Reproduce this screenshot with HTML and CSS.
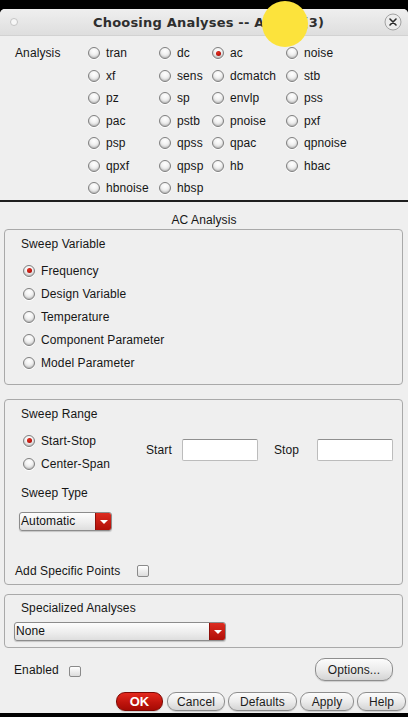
FILE: index.html
```html
<!DOCTYPE html>
<html>
<head>
<meta charset="utf-8">
<title>Choosing Analyses</title>
<link rel="stylesheet" href="styles.css">
</head>
<body>
<div class="window">
  <div class="titlebar">
    <span class="tb-dot"></span>
    <span class="title">Choosing Analyses -- ADE L (3)</span>
    <svg class="tb-close" width="18" height="18" viewBox="0 0 18 18">
      <circle cx="9" cy="9" r="8" fill="#ececec" stroke="#a2a2a2" stroke-width="1"/>
      <path d="M6 6 L12 12 M12 6 L6 12" stroke="#2a2a2a" stroke-width="1.6" stroke-linecap="round"/>
    </svg>
  </div>

  <div class="analysis">
    <div class="an-label">Analysis</div>
    <div class="an-grid">
      <label class="opt"><span class="radio"></span>tran</label>
      <label class="opt"><span class="radio"></span>dc</label>
      <label class="opt"><span class="radio on"></span>ac</label>
      <label class="opt"><span class="radio"></span>noise</label>
      <label class="opt"><span class="radio"></span>xf</label>
      <label class="opt"><span class="radio"></span>sens</label>
      <label class="opt"><span class="radio"></span>dcmatch</label>
      <label class="opt"><span class="radio"></span>stb</label>
      <label class="opt"><span class="radio"></span>pz</label>
      <label class="opt"><span class="radio"></span>sp</label>
      <label class="opt"><span class="radio"></span>envlp</label>
      <label class="opt"><span class="radio"></span>pss</label>
      <label class="opt"><span class="radio"></span>pac</label>
      <label class="opt"><span class="radio"></span>pstb</label>
      <label class="opt"><span class="radio"></span>pnoise</label>
      <label class="opt"><span class="radio"></span>pxf</label>
      <label class="opt"><span class="radio"></span>psp</label>
      <label class="opt"><span class="radio"></span>qpss</label>
      <label class="opt"><span class="radio"></span>qpac</label>
      <label class="opt"><span class="radio"></span>qpnoise</label>
      <label class="opt"><span class="radio"></span>qpxf</label>
      <label class="opt"><span class="radio"></span>qpsp</label>
      <label class="opt"><span class="radio"></span>hb</label>
      <label class="opt"><span class="radio"></span>hbac</label>
      <label class="opt"><span class="radio"></span>hbnoise</label>
      <label class="opt"><span class="radio"></span>hbsp</label>
    </div>
  </div>

  <div class="sep"></div>
  <div class="sec-title">AC Analysis</div>

  <div class="box box-var">
    <div class="box-title">Sweep Variable</div>
    <div class="radio-list">
      <label class="row"><span class="radio on"></span>Frequency</label>
      <label class="row"><span class="radio"></span>Design Variable</label>
      <label class="row"><span class="radio"></span>Temperature</label>
      <label class="row"><span class="radio"></span>Component Parameter</label>
      <label class="row"><span class="radio"></span>Model Parameter</label>
    </div>
  </div>

  <div class="box box-range">
    <div class="box-title">Sweep Range</div>
    <div class="range-top">
      <div class="radio-list rng-radios">
        <label class="row"><span class="radio on"></span>Start-Stop</label>
        <label class="row"><span class="radio"></span>Center-Span</label>
      </div>
      <div class="fields">
        <span class="f-label f-start">Start</span>
        <span class="input"></span>
        <span class="f-label f-stop">Stop</span>
        <span class="input"></span>
      </div>
    </div>
    <div class="sub-title">Sweep Type</div>
    <div class="dropdown dd-type">
      <span class="dd-text">Automatic</span>
      <span class="dd-btn"></span>
    </div>
    <div class="check-row add-row">
      <span>Add Specific Points</span>
      <span class="checkbox chk-add"></span>
    </div>
  </div>

  <div class="box box-spec">
    <div class="box-title">Specialized Analyses</div>
    <div class="dropdown dd-spec">
      <span class="dd-text">None</span>
      <span class="dd-btn"></span>
    </div>
  </div>

  <div class="enabled-row">
    <div class="check-row">
      <span>Enabled</span>
      <span class="checkbox chk-en"></span>
    </div>
    <button class="btn btn-options">Options...</button>
  </div>

  <div class="button-row">
    <button class="btn btn-ok">OK</button>
    <button class="btn btn-cancel">Cancel</button>
    <button class="btn btn-defaults">Defaults</button>
    <button class="btn btn-apply">Apply</button>
    <button class="btn btn-help">Help</button>
  </div>
</div>
<div class="cursor-spot"></div>
</body>
</html>
```

FILE: styles.css
```css
* { box-sizing: border-box; margin: 0; padding: 0; }

html, body { background: #000; }

body {
  width: 408px;
  height: 717px;
  overflow: hidden;
  position: relative;
  font-family: "Liberation Sans", Arial, sans-serif;
  font-size: 12px;
  letter-spacing: 0.1px;
  color: #161616;
}

.window {
  margin-top: 9px;
  height: 704px;
  background: #efefef;
  border-radius: 5px 5px 0 0;
  overflow: hidden;
  display: flex;
  flex-direction: column;
}

/* Title bar */
.titlebar {
  height: 27px;
  flex: none;
  display: grid;
  grid-template-columns: 1fr auto 1fr;
  align-items: center;
  padding: 0 6px 0 10px;
  background: linear-gradient(#efefef, #dedede);
  border-bottom: 1px solid #d2d2d2;
}
.tb-dot {
  width: 8px;
  height: 8px;
  border-radius: 50%;
  background: #f7f7f7;
  border: 1px solid #c4c4c4;
  justify-self: start;
}
.title {
  font-family: "DejaVu Sans", sans-serif;
  font-weight: bold;
  font-size: 13px;
  letter-spacing: 0.2px;
  color: #2e2e2e;
  padding-left: 5px;
}
.tb-close { justify-self: end; }

/* Analysis grid */
.analysis {
  flex: none;
  height: 164px;
  padding-top: 6px;
  display: flex;
}
.an-label {
  width: 88px;
  padding-left: 15px;
  height: 22.5px;
  line-height: 22.5px;
}
.an-grid {
  display: grid;
  grid-template-columns: 71px 53px 74px auto;
  grid-auto-rows: 22.5px;
}
.opt {
  display: flex;
  align-items: center;
  white-space: nowrap;
}

.radio {
  flex: none;
  position: relative;
  width: 12px;
  height: 12px;
  margin-right: 6px;
  border-radius: 50%;
  border: 1px solid #7f7f7f;
  background: radial-gradient(circle at 50% 30%, #ffffff 0%, #f2f2f2 40%, #c4c4c4 100%);
  box-shadow: 0 1px 0 rgba(255,255,255,0.9), inset 0 -1px 1px rgba(0,0,0,0.12);
}
.radio.on::after {
  content: "";
  position: absolute;
  left: 2.5px;
  top: 2.5px;
  width: 5px;
  height: 5px;
  border-radius: 50%;
  background: radial-gradient(circle at 40% 35%, #e8301f, #950000);
}

.sep {
  flex: none;
  height: 2px;
  background: #1f1f1f;
}

.sec-title {
  flex: none;
  text-align: center;
  line-height: 16px;
  margin: 10px 0 1px;
}

/* Boxes */
.box {
  flex: none;
  margin: 0 5px 0 4px;
  border: 1px solid #a9a9a9;
  border-radius: 4px;
  padding: 6px 0 0 16px;
}
.box-title { line-height: 16px; }

.box-var { padding-bottom: 10px; }
.radio-list { margin-top: 7px; margin-left: 2px; }
.row {
  display: flex;
  align-items: center;
  height: 23px;
  white-space: nowrap;
}

.box-range { margin-top: 14px; padding-bottom: 5px; }
.range-top { display: flex; }
.rng-radios { width: 123px; flex: none; }
.fields {
  margin-top: 17px;
  display: flex;
  align-items: center;
  height: 22px;
}
.f-label { line-height: 16px; }
.f-start { width: 36px; }
.f-stop { width: 43px; margin-left: 16px; }
.input {
  width: 76px;
  height: 22px;
  background: #fff;
  border: 1px solid #bcbcbc;
  border-top-color: #8f8f8f;
  border-radius: 2px;
}

.sub-title { line-height: 16px; margin-top: 10px; }

.dropdown {
  display: flex;
  height: 19px;
  border: 1px solid #8c8c8c;
  border-radius: 3px;
  background: linear-gradient(#fdfdfd, #ececec 60%, #dedede);
  overflow: hidden;
  box-shadow: 0 1px 1px rgba(0,0,0,0.18);
}
.dd-text {
  flex: 1;
  line-height: 17px;
  padding-left: 1px;
  color: #111;
}
.dd-btn {
  width: 16px;
  flex: none;
  display: flex;
  align-items: center;
  justify-content: center;
  background: linear-gradient(#dc2c20, #b10e07);
  border-left: 1px solid #8d0f0a;
}
.dd-btn::after {
  content: "";
  width: 0;
  height: 0;
  border-left: 4px solid transparent;
  border-right: 4px solid transparent;
  border-top: 4px solid #fff;
  margin-top: 1px;
}
.dd-type { width: 93px; margin-left: -2px; margin-top: 11px; }

.check-row {
  display: flex;
  align-items: center;
  line-height: 16px;
}
.add-row { margin-top: 32px; margin-left: -6px; }
.checkbox {
  width: 12px;
  height: 12px;
  margin-left: 14px;
  border: 1px solid #8a8a8a;
  border-radius: 2px;
  background: linear-gradient(#ffffff, #dcdcdc);
}
.chk-add { margin-left: 17px; }

.box-spec { margin-top: 9px; padding-bottom: 6px; padding-top: 5px; }
.dd-spec { width: 212px; margin-left: -7px; margin-top: 6px; }

/* Enabled row */
.enabled-row {
  flex: none;
  margin-top: 10px;
  height: 23px;
  display: flex;
  align-items: center;
  justify-content: space-between;
  padding: 0 15px 0 14px;
}
.chk-en { margin-left: 10px; width: 12px; height: 11px; margin-top: 4px; }

/* Buttons */
.btn {
  height: 19px;
  border: 1px solid #8e8e8e;
  border-radius: 9px;
  background: linear-gradient(#fcfcfc, #ececec 50%, #d4d4d4);
  font-family: "Liberation Sans", Arial, sans-serif;
  font-size: 12px;
  letter-spacing: 0.1px;
  color: #1c1c1c;
  display: flex;
  align-items: center;
  justify-content: center;
  box-shadow: 0 1px 1px rgba(0,0,0,0.15);
}
.btn-options { width: 78px; height: 23px; border-radius: 10px; }

.button-row {
  flex: none;
  margin-top: 11px;
  display: flex;
  justify-content: flex-end;
  gap: 3px;
  padding-right: 2px;
}
.btn-ok {
  width: 47px;
  margin-right: 1px;
  background: linear-gradient(#e4291e, #c0150d 55%, #a50a04);
  border-color: #7e0904;
  color: #fff;
  font-weight: bold;
  font-size: 13px;
}
.btn-cancel { width: 58px; }
.btn-defaults { width: 69px; }
.btn-apply { width: 54px; }
.btn-help { width: 49px; }

/* cursor highlight overlay */
.cursor-spot {
  position: absolute;
  left: 262px;
  top: 1px;
  width: 46px;
  height: 46px;
  border-radius: 50%;
  background: #fce33c;
}
```
